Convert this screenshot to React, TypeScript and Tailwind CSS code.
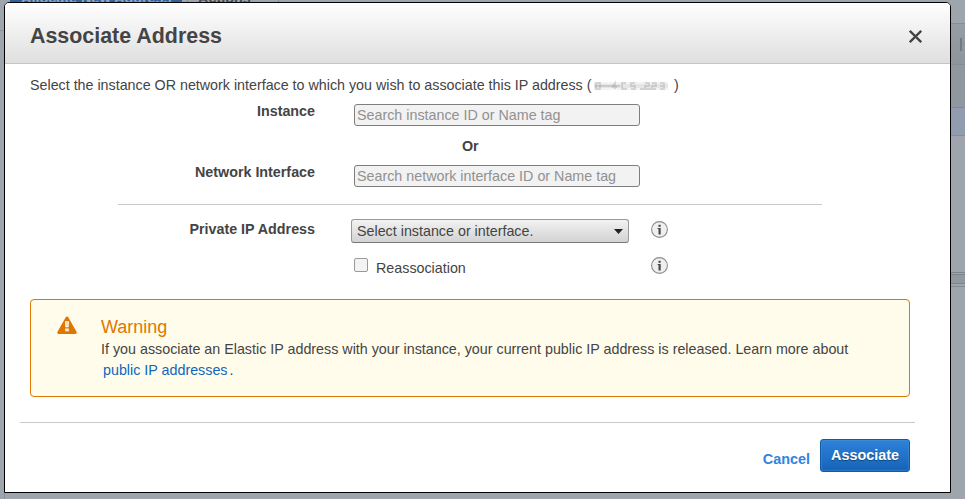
import React from "react";

function Info() {
  return (
    <svg width="17" height="17" viewBox="0 0 17 17" className="shrink-0">
      <circle cx="8.5" cy="8.5" r="7.9" fill="#efefef" stroke="#8c8c8c" strokeWidth="1.1" />
      <rect x="7.5" y="3.8" width="2.2" height="2" fill="#484848" />
      <path d="M6.6 6.9h3.1v6.6H7.5V8H6.6z" fill="#484848" />
    </svg>
  );
}

function Backdrop() {
  return (
    <div className="flex h-[499px] w-[965px] flex-col overflow-hidden bg-[#9ea5ac]">
      <div className="flex h-[3px] shrink-0 items-end overflow-hidden">
        <div className="ml-[10px] flex h-[3px] w-[172px] items-end whitespace-nowrap bg-[#2e6396] pl-[11px] text-[14.4px] font-bold leading-[9px] text-[#93a9c2]">
          Allocate New Address
        </div>
        <div className="ml-[5px] h-[3px] w-px bg-[#868c92]" />
        <div className="ml-[10px] w-[53px] -translate-y-[2px] h-[3px] text-[14.4px] font-bold leading-[1px] text-[#44484c]">Actions</div>
        <div className="ml-[27px] h-[3px] w-px bg-[#868c92]" />
      </div>
      <div className="flex grow justify-between">
        <div className="flex w-[5px] flex-col">
          <div className="h-[28px] border-b border-[#8a9198]" />
          <div className="grow" />
          <div className="h-[6px] border-r border-[#8a9198]" />
        </div>
        <div className="flex w-[14px] flex-col">
          <div className="h-[20px] shrink-0" />
          <div className="flex h-[42px] shrink-0 items-start justify-end border-y border-[#858c93] bg-gradient-to-b from-[#979da4] to-[#8d949b]">
            <div className="mt-[14px] h-[13px] w-[2px] bg-[#727980]" />
            <div className="mt-[20px] mr-px ml-px h-px w-px bg-[#727980]" />
          </div>
          <div className="h-[43px] shrink-0 border-b border-[#828990] bg-[#90979e]" />
          <div className="h-[28px] shrink-0 border-b border-[#878e98] bg-[#919daf]" />
          <div className="h-[136px] shrink-0" />
          <div className="h-[2px] shrink-0 border-t border-[#7d848b]" />
          <div className="h-[10px] shrink-0 border-y border-[#7d848b] bg-[#91989f]" />
          <div className="h-[3px] shrink-0 border-b border-[#838a91]" />
        </div>
      </div>
    </div>
  );
}

function Redacted() {
  return (
    <svg width="74" height="12" viewBox="0 0 74 12" className="ml-[3px] shrink-0">
      <g fill="#999">
        <rect x="0" y="2" width="74" height="8" opacity=".12" />
        <rect x="0" y="4" width="74" height="4" opacity=".14" />
        <rect x="1" y="5" width="25" height="2" opacity=".35" />
        <path
          d="M2 3h4v6H2zM18 7l3-4v6M18 7h5M32 3h-4v6h5M41 3h-4v3h4v3h-4M46 9h14M51 3h4v3h-4v3h4M58 3h4v3h-4v3h4M66 3h4v6h-4M66 6h4"
          fill="none"
          stroke="#999"
          strokeWidth="1.8"
          opacity=".35"
        />
      </g>
    </svg>
  );
}

const label = "w-[285px] shrink-0 text-right font-bold leading-[16px]";
const field =
  "ml-[39px] mt-px h-[22px] w-[286px] rounded-[3px] border border-[#7e7e7e] bg-[#f2f2f2] px-[2px] text-[14.3px] text-[#444] placeholder-[#919191] outline-none";

export default function App() {
  return (
    <div className="relative h-[499px] w-[965px] overflow-hidden font-['Liberation_Sans',Arial,sans-serif] text-[14.3px] text-[#444]">
      <Backdrop />
      <section className="absolute left-[4px] top-[2px] flex h-[491px] w-[947px] flex-col overflow-hidden rounded-t-[5px] border border-black bg-white">
        <header className="flex h-[61px] shrink-0 items-center justify-between border-b border-[#c4c4c4] bg-gradient-to-b from-white to-[#dfdfdf] pl-[25px] pr-[28px]">
          <h1 className="mt-[5px] text-[21.42px] font-bold leading-[24px]">Associate Address</h1>
          <svg width="13" height="13" viewBox="0 0 13 13" className="mt-[7px]">
            <path d="M.8.8l11.4 11.4M12.2.8L.8 12.2" stroke="#444" strokeWidth="2.3" />
          </svg>
        </header>
        <div className="flex h-[39px] shrink-0 items-center whitespace-nowrap pl-[25px] pt-[5px]">
          <span className="w-[561px] tracking-[-0.01px]">
            Select the instance OR network interface to which you wish to associate this IP address (
          </span>
          <Redacted />
          <span className="ml-[6px]">)</span>
        </div>
        <div className="flex h-[31px] shrink-0 items-start pl-[25px]">
          <label className={label}>Instance</label>
          <input className={field} placeholder="Search instance ID or Name tag" />
        </div>
        <div className="h-[30px] shrink-0 pl-[457px] pt-[4px] font-bold leading-[16px]">Or</div>
        <div className="flex h-[40px] shrink-0 items-start pl-[25px]">
          <label className={label}>Network Interface</label>
          <input className={field} placeholder="Search network interface ID or Name tag" />
        </div>
        <div className="ml-[113px] h-px w-[704px] shrink-0 bg-[#c9c9c9]" />
        <div className="flex h-[40px] shrink-0 items-start pl-[25px] pt-[14px]">
          <label className={`${label} mt-[2px]`}>Private IP Address</label>
          <button className="ml-[36px] flex h-[24px] w-[278px] items-center justify-between rounded-[3px] border border-[#999] border-b-[#777] bg-gradient-to-b from-[#f2f2f2] to-[#d3d3d3] pl-[5px] pr-[5px]">
            <span className="leading-[18px]">Select instance or interface.</span>
            <svg width="9" height="5" viewBox="0 0 9 5">
              <path d="M0 0h9L4.5 5z" fill="#222" />
            </svg>
          </button>
          <span className="ml-[22px] mt-[2px]"><Info /></span>
        </div>
        <div className="flex h-[54px] shrink-0 items-start pl-[349px] pt-[13px]">
          <span className="h-[14px] w-[14px] shrink-0 rounded-[2px] border border-[#999] bg-[#f3f3f3]" />
          <span className="ml-[8px] mt-[2px] w-[275px] leading-[16px]">Reassociation</span>
          <span className="-mt-px"><Info /></span>
        </div>
        <div className="ml-[25px] flex h-[98px] w-[880px] shrink-0 items-start rounded-[4px] border border-[#e07700] bg-[#fffceb]">
          <svg width="20" height="18" viewBox="0 0 20 18" className="ml-[26px] mt-[16px] shrink-0">
            <path d="M10 2L18.2 16.4H1.8z" fill="#e07700" stroke="#e07700" strokeWidth="3" strokeLinejoin="round" />
            <path d="M8 5.2h4L11.6 11.2H8.4zM8.2 12.4h3.6v2.8H8.2z" fill="#fffceb" />
            <path d="M9.5 6.3h1v3.8h-1zM9.6 13.3h.8v.9h-.8z" fill="#e07700" opacity=".45" />
          </svg>
          <div className="ml-[24px] mt-[17px]">
            <h2 className="text-[18px] leading-[21px] text-[#e07700]">Warning</h2>
            <p className="mt-px whitespace-nowrap leading-[21px]">
              If you associate an Elastic IP address with your instance, your current public IP address is released. Learn more about
              <br />
              <a className="ml-[2px] mr-[2px] text-[#1166bb]">public IP addresses</a>.
            </p>
          </div>
        </div>
        <div className="ml-[15px] mt-[25px] h-px w-[895px] shrink-0 bg-[#c9c9c9]" />
        <footer className="flex shrink-0 items-start justify-end pr-[40px] pt-[16px] text-[14.4px] font-bold">
          <a className="mr-[10px] mt-[12px] leading-[16px] text-[#3184dd]">Cancel</a>
          <button className="h-[33px] w-[90px] rounded-[3px] border border-[#1159a6] bg-gradient-to-b from-[#2e82d8] to-[#1463b9] text-white shadow-[inset_0_0_1px_1px_rgba(80,150,220,0.4)] [text-shadow:0_1px_1px_rgba(0,0,0,0.4)]">
            Associate
          </button>
        </footer>
      </section>
    </div>
  );
}
